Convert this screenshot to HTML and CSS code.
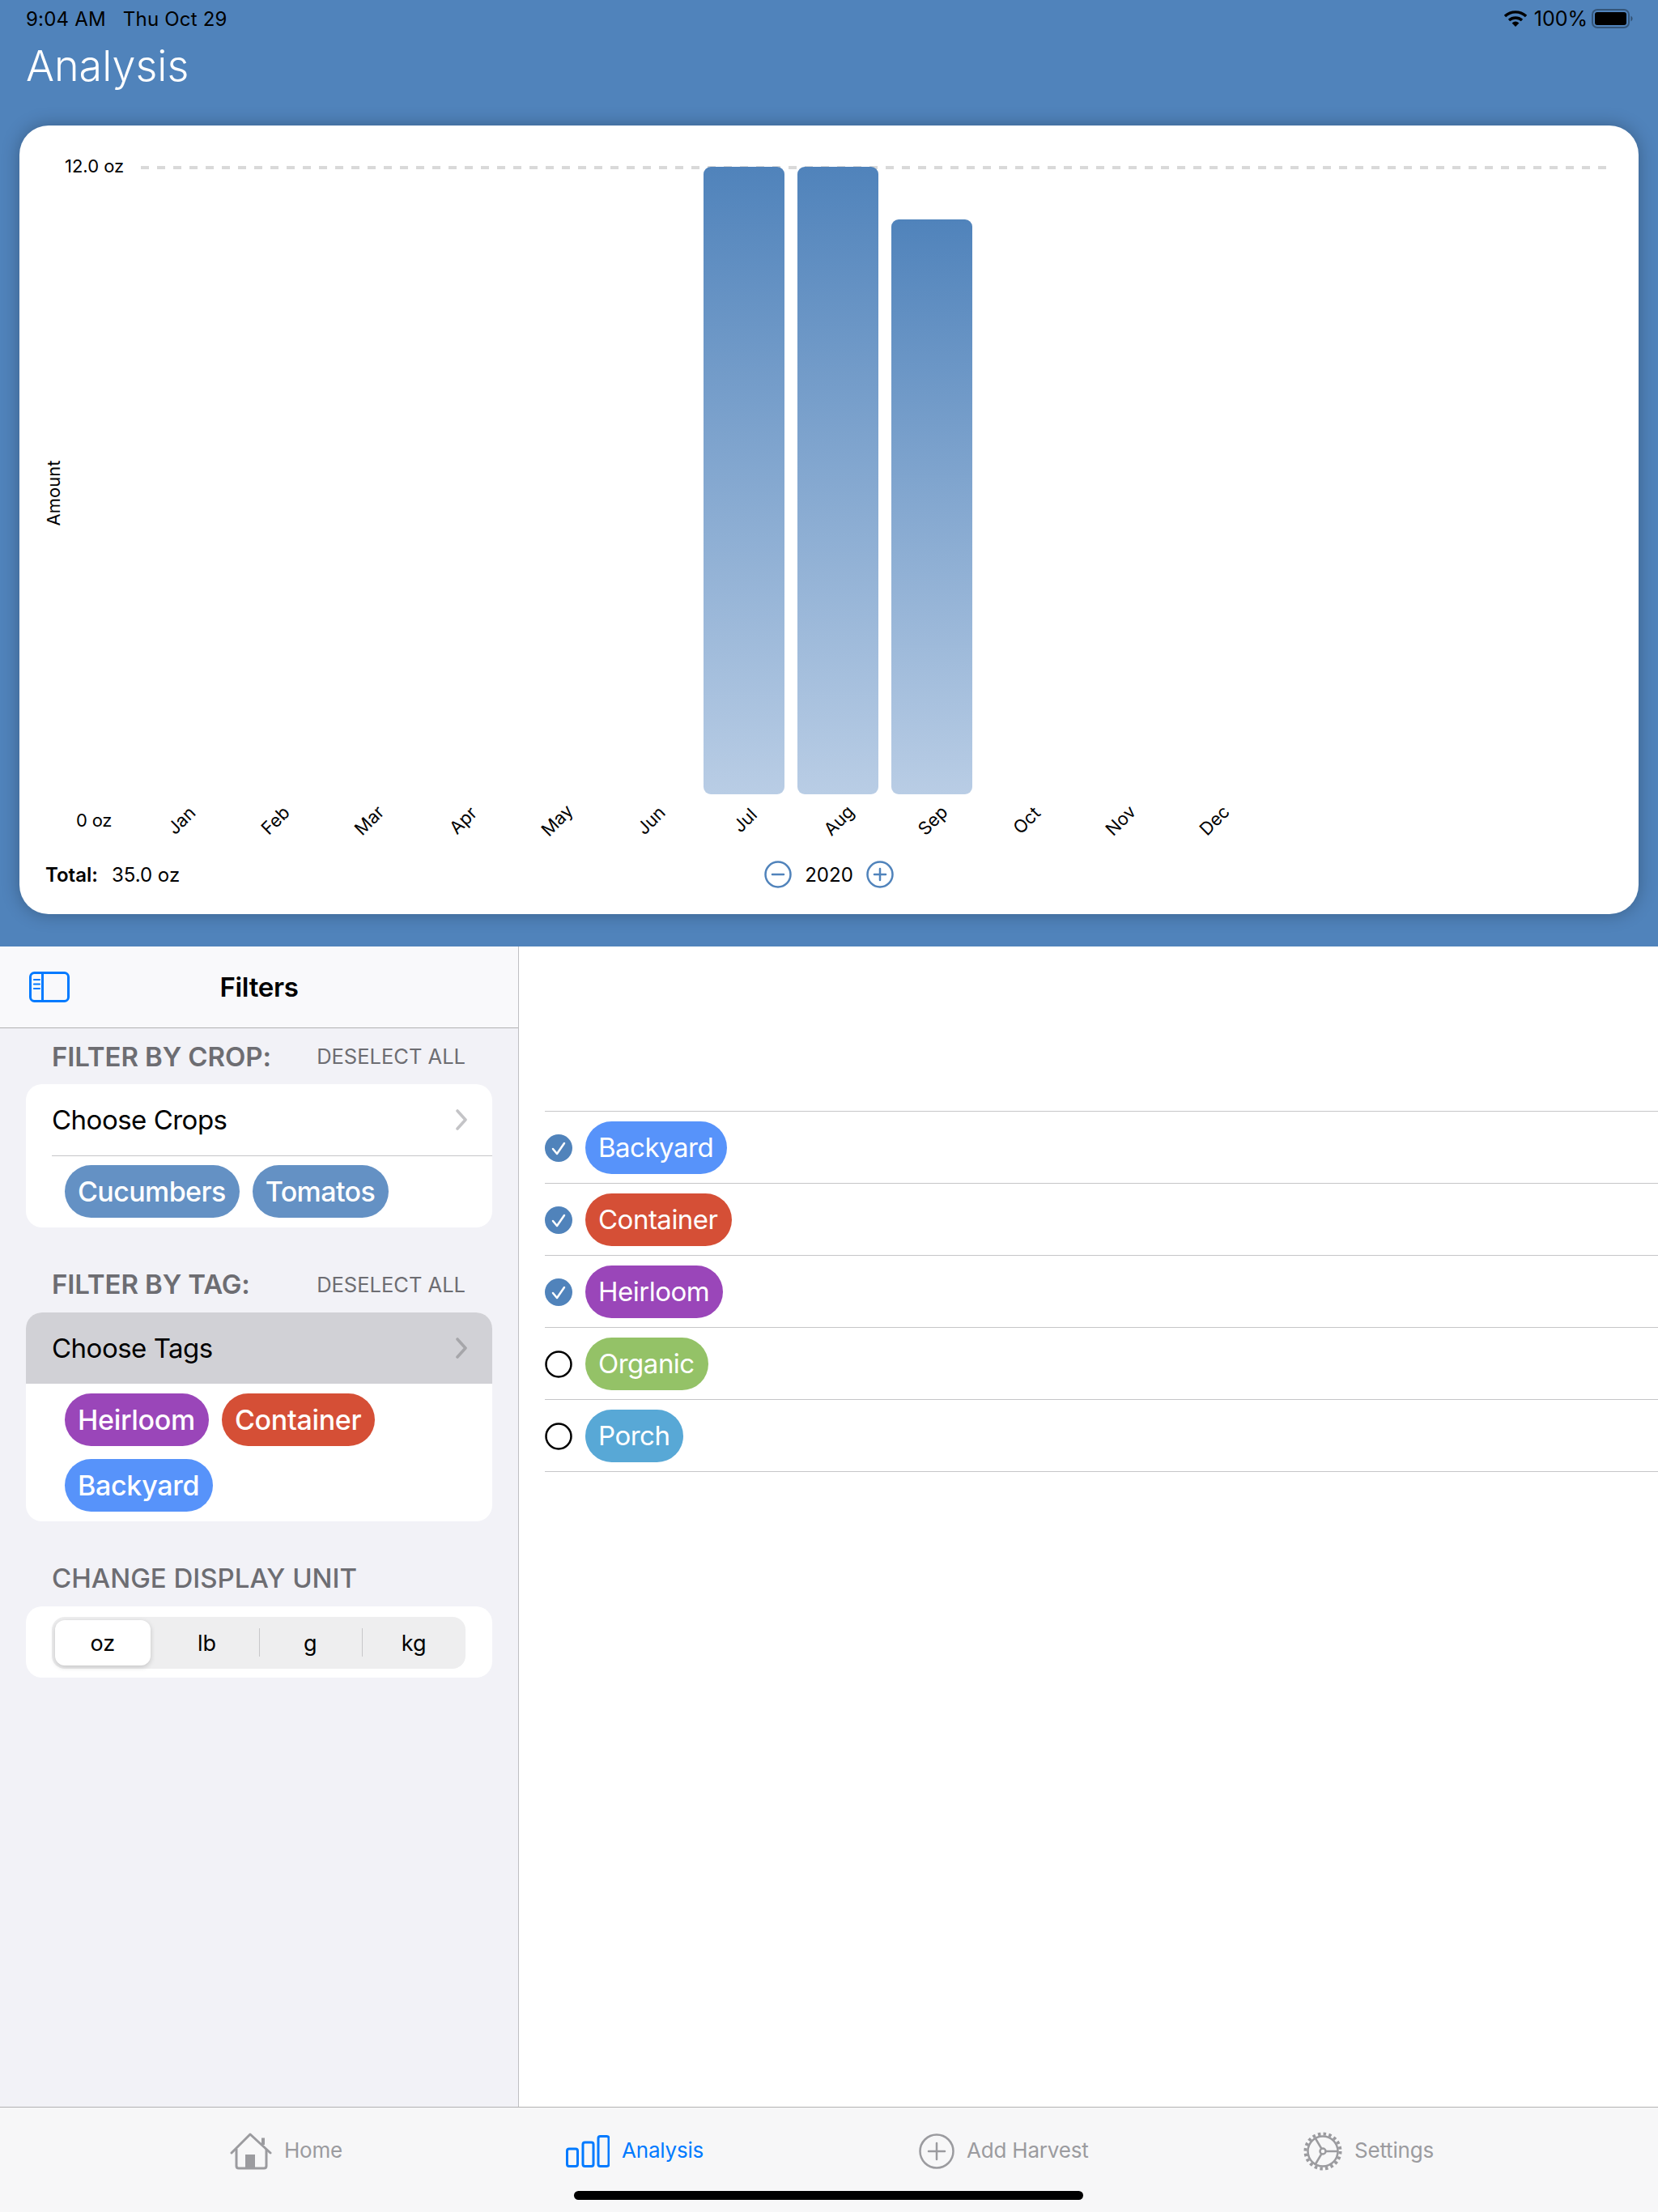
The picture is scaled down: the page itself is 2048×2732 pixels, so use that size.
FILE: index.html
```html
<!DOCTYPE html>
<html lang="en">
<head>
<meta charset="utf-8">
<title>Analysis</title>
<link rel="stylesheet" href="styles.css">
</head>
<body>
<div class="app">
  <header class="top">
    <div class="status">
      <div class="status-left"><span>9:04 AM</span><span>Thu Oct 29</span></div>
      <div class="status-right">
        <svg class="wifi" viewBox="0 0 28 20"><path d="M1 7 A19 19 0 0 1 27 7" fill="none" stroke="#000" stroke-width="3.4"/><path d="M6 12 A12 12 0 0 1 22 12" fill="none" stroke="#000" stroke-width="3.4"/><path d="M9.6 15.4 A7 7 0 0 1 18.4 15.4 L14 20 Z" fill="#000"/></svg>
        <span>100%</span>
        <svg class="battery" viewBox="0 0 52 24"><rect x="1" y="1" width="45" height="22" rx="6" fill="none" stroke="#000" stroke-opacity=".35" stroke-width="2"/><rect x="4" y="4" width="39" height="16" rx="3" fill="#000"/><path d="M48.500 8.500 A4 4 0 0 1 48.500 15.500 Z" fill="#000" fill-opacity=".4"/></svg>
      </div>
    </div>
    <h1 class="title">Analysis</h1>
    <section class="card">
      <div class="plot">
        <span class="axis-title">Amount</span>
        <span class="y-label y-max">12.0 oz</span>
        <span class="y-label y-min">0 oz</span>
        <div class="dash"></div>
        <div class="bars">
          <div class="col"></div><div class="col"></div><div class="col"></div>
          <div class="col"></div><div class="col"></div><div class="col"></div>
          <div class="col"><div class="bar" style="height:775px"></div></div>
          <div class="col"><div class="bar" style="height:775px"></div></div>
          <div class="col"><div class="bar" style="height:710px"></div></div>
          <div class="col"></div><div class="col"></div><div class="col"></div>
        </div>
      </div>
      <div class="months">
        <span>Jan</span><span>Feb</span><span>Mar</span><span>Apr</span><span>May</span><span>Jun</span>
        <span>Jul</span><span>Aug</span><span>Sep</span><span>Oct</span><span>Nov</span><span>Dec</span>
      </div>
      <div class="foot">
        <div class="total"><b>Total:</b><span>35.0 oz</span></div>
        <div class="stepper">
          <svg class="step" viewBox="0 0 34 34"><circle cx="17" cy="17" r="15.500" fill="none" stroke="#5083bb" stroke-width="2.500"/><path d="M10 17 H24" stroke="#5083bb" stroke-width="2.500" stroke-linecap="round"/></svg>
          <span>2020</span>
          <svg class="step" viewBox="0 0 34 34"><circle cx="17" cy="17" r="15.500" fill="none" stroke="#5083bb" stroke-width="2.500"/><path d="M10 17 H24 M17 10 V24" stroke="#5083bb" stroke-width="2.500" stroke-linecap="round"/></svg>
        </div>
        <div></div>
      </div>
    </section>
  </header>

  <main class="split">
    <aside class="side">
      <div class="nav">
        <svg class="side-icon" viewBox="0 0 50 38"><rect x="1.500" y="1.500" width="47" height="35" rx="5" fill="none" stroke="#007aff" stroke-width="3"/><path d="M16.500 2 V36" stroke="#007aff" stroke-width="3"/><path d="M6 10 H13 M6 15.500 H13 M6 21 H13" stroke="#007aff" stroke-width="2.200" stroke-linecap="round"/></svg>
        <span class="nav-title">Filters</span>
      </div>
      <div class="sec-head first"><span class="sec-title">FILTER BY CROP:</span><span class="sec-link">DESELECT ALL</span></div>
      <div class="group">
        <div class="row"><span>Choose Crops</span><svg class="chev" viewBox="0 0 14 26"><path d="M2 2 L12 13 L2 24" fill="none" stroke="#c4c4c7" stroke-width="3.600" stroke-linecap="round" stroke-linejoin="round"/></svg></div>
        <div class="chips ruled">
          <span class="chip strong crop">Cucumbers</span>
          <span class="chip strong crop">Tomatos</span>
        </div>
      </div>
      <div class="sec-head"><span class="sec-title">FILTER BY TAG:</span><span class="sec-link">DESELECT ALL</span></div>
      <div class="group">
        <div class="row active"><span>Choose Tags</span><svg class="chev" viewBox="0 0 14 26"><path d="M2 2 L12 13 L2 24" fill="none" stroke="#a6a6aa" stroke-width="3.600" stroke-linecap="round" stroke-linejoin="round"/></svg></div>
        <div class="chips">
          <span class="chip strong heirloom">Heirloom</span>
          <span class="chip strong container">Container</span>
          <span class="chip strong backyard">Backyard</span>
        </div>
      </div>
      <div class="sec-head unit"><span class="sec-title light">CHANGE DISPLAY UNIT</span></div>
      <div class="group seg-wrap">
        <div class="seg">
          <span class="seg-item on">oz</span>
          <span class="seg-item">lb</span>
          <span class="seg-item div">g</span>
          <span class="seg-item div">kg</span>
        </div>
      </div>
    </aside>
    <section class="pane">
      <ul class="tags">
        <li class="tag-row"><svg class="check" viewBox="0 0 34 34"><circle cx="17" cy="17" r="17" fill="#5083bb"/><path d="M10 18 L15 24 L24 11" fill="none" stroke="#fff" stroke-width="2.500" stroke-linecap="round" stroke-linejoin="round"/></svg><span class="chip backyard">Backyard</span></li>
        <li class="tag-row"><svg class="check" viewBox="0 0 34 34"><circle cx="17" cy="17" r="17" fill="#5083bb"/><path d="M10 18 L15 24 L24 11" fill="none" stroke="#fff" stroke-width="2.500" stroke-linecap="round" stroke-linejoin="round"/></svg><span class="chip container">Container</span></li>
        <li class="tag-row"><svg class="check" viewBox="0 0 34 34"><circle cx="17" cy="17" r="17" fill="#5083bb"/><path d="M10 18 L15 24 L24 11" fill="none" stroke="#fff" stroke-width="2.500" stroke-linecap="round" stroke-linejoin="round"/></svg><span class="chip heirloom">Heirloom</span></li>
        <li class="tag-row"><svg class="check" viewBox="0 0 34 34"><circle cx="17" cy="17" r="15.500" fill="none" stroke="#000" stroke-width="2.500"/></svg><span class="chip organic">Organic</span></li>
        <li class="tag-row"><svg class="check" viewBox="0 0 34 34"><circle cx="17" cy="17" r="15.500" fill="none" stroke="#000" stroke-width="2.500"/></svg><span class="chip porch">Porch</span></li>
      </ul>
    </section>
  </main>

  <footer class="tabs">
    <div class="tab">
      <svg class="ic-home" viewBox="0 0 52 46"><path d="M2 25 L25 2 L50 25" fill="none" stroke="#9b9b9f" stroke-width="3" stroke-linecap="round" stroke-linejoin="round"/><path d="M41 15 V6.500" fill="none" stroke="#9b9b9f" stroke-width="4"/><path d="M8 20 V41 Q8 44 11 44 H42 Q45 44 45 41 V20" fill="none" stroke="#9b9b9f" stroke-width="3"/><rect x="19" y="27" width="12" height="17" fill="#9b9b9f"/></svg>
      <span class="tab-label">Home</span>
    </div>
    <div class="tab current">
      <svg class="ic-bars" viewBox="0 0 54 40"><rect x="1.500" y="17" width="13" height="21.500" rx="2.500" fill="none" stroke="#007aff" stroke-width="3"/><rect x="21" y="9" width="13" height="29.500" rx="2.500" fill="none" stroke="#007aff" stroke-width="3"/><rect x="40" y="1.500" width="13" height="37" rx="2.500" fill="none" stroke="#007aff" stroke-width="3"/></svg>
      <span class="tab-label">Analysis</span>
    </div>
    <div class="tab">
      <svg class="ic-add" viewBox="0 0 44 44"><circle cx="22" cy="22" r="20.500" fill="none" stroke="#9b9b9f" stroke-width="2.500"/><path d="M12 22 H32 M22 12 V32" stroke="#9b9b9f" stroke-width="2.500" stroke-linecap="round"/></svg>
      <span class="tab-label">Add Harvest</span>
    </div>
    <div class="tab">
      <svg class="ic-gear" viewBox="0 0 48 48"><circle cx="24" cy="24" r="18.500" fill="none" stroke="#9b9b9f" stroke-width="2.500"/><circle cx="24" cy="24" r="21.500" fill="none" stroke="#9b9b9f" stroke-width="4" stroke-dasharray="3.500 3.250"/><circle cx="24" cy="24" r="3.500" fill="none" stroke="#9b9b9f" stroke-width="2.500"/><path d="M27.500 24 H42 M22.500 21 L14.500 7.500 M22.500 27 L14.500 40.500" fill="none" stroke="#9b9b9f" stroke-width="2.500"/></svg>
      <span class="tab-label">Settings</span>
    </div>
    <div class="home-bar"></div>
  </footer>
</div>
</body>
</html>
```

FILE: styles.css
```css
* { box-sizing: border-box; }
html, body { margin: 0; padding: 0; }
body {
  width: 2048px;
  height: 2732px;
  overflow: hidden;
  background: #fff;
  color: #000;
  font-family: Inter, "Noto Sans", "Liberation Sans", sans-serif;
}
.app { display: flex; flex-direction: column; height: 2732px; }

/* header */
.top { background: #5083bb; height: 1169px; padding: 0 24px; display: flex; flex-direction: column; flex: none; }
.status { height: 46px; margin: 0 -24px; padding: 0 30px 0 32px; display: flex; justify-content: space-between; align-items: center; font-size: 24px; }
.status-left { display: flex; gap: 21px; letter-spacing: 0.2px; }
.status-right { display: flex; align-items: center; gap: 9px; font-size: 25px; }
.wifi { width: 28px; height: 20px; }
.battery { width: 52px; height: 24px; margin-left: -4px; }
.title { margin: 0 0 0 8px; height: 72px; line-height: 72px; font-size: 52px; font-weight: 300; color: #fff; }
.card {
  margin-top: 37px;
  height: 974px;
  background: #fff;
  border-radius: 36px;
  box-shadow: 0 0 22px rgba(0, 0, 0, .28);
  display: flex;
  flex-direction: column;
}
.plot { position: relative; margin: 51px 0 0 150px; width: 1810px; height: 775px; }
.dash {
  position: absolute;
  left: 0; right: 0; top: -1px;
  height: 4px;
  background: repeating-linear-gradient(90deg, #d9d9d9 0 10px, transparent 10px 20px);
}
.bars { position: relative; display: flex; gap: 16px; height: 100%; align-items: flex-end; margin-left: -1px; }
.col { width: 100px; flex: none; display: flex; align-items: flex-end; }
.bar { width: 100%; border-radius: 9px; background: linear-gradient(180deg, #5083bb, #b9cde5); }
.y-label { position: absolute; font-size: 22px; line-height: 26px; white-space: nowrap; }
.y-max { left: -94px; top: -14px; }
.y-min { left: -80px; top: 794px; letter-spacing: -0.2px; }
.axis-title { position: absolute; left: -108px; top: 403px; font-size: 22px; line-height: 26px; transform: translate(-50%, -50%) rotate(-90deg); white-space: nowrap; }
.months { margin-left: 150px; height: 64px; display: flex; gap: 16px; align-items: center; font-size: 22px; }
.months span { width: 100px; flex: none; text-align: center; transform: rotate(-45deg); }
.foot { height: 70px; padding: 0 32px; display: grid; grid-template-columns: 1fr auto 1fr; align-items: center; font-size: 24px; }
.total { display: flex; gap: 17px; }
.total b { font-weight: 600; }
.stepper { display: flex; align-items: center; gap: 16px; }
.step { width: 34px; height: 34px; }

/* split */
.split { flex: 1; display: flex; min-height: 0; }
.side { width: 641px; flex: none; background: #f2f2f7; border-right: 1px solid #c0c0c3; }
.nav { position: relative; height: 101px; background: #f9f9fb; border-bottom: 1px solid #b2b2b2; display: flex; align-items: center; justify-content: center; }
.side-icon { position: absolute; left: 36px; top: 31px; width: 50px; height: 38px; }
.nav-title { font-size: 33px; font-weight: 600; letter-spacing: -0.3px; }
.sec-head { height: 70px; margin-top: 35px; padding: 0 65px 0 64px; display: flex; align-items: center; justify-content: space-between; }
.sec-head.first { height: 69px; margin-top: 0; }
.sec-head.unit { margin-top: 35px; }
.sec-title { font-size: 33px; font-weight: 600; color: #6d6d72; letter-spacing: -0.1px; }
.sec-title.light { font-weight: 500; letter-spacing: 0; }
.sec-link { font-size: 25.500px; color: #6d6d72; }
.group { margin: 0 32px; background: #fff; border-radius: 20px; overflow: hidden; }
.row { height: 88px; padding: 0 31px 0 32px; display: flex; align-items: center; justify-content: space-between; font-size: 33px; letter-spacing: -0.5px; }
.row.active { background: #d1d1d6; }
.chev { width: 14px; height: 26px; }
.chips { padding: 12px 48px; display: flex; flex-wrap: wrap; gap: 16px; position: relative; }
.chips.ruled::before { content: ""; position: absolute; left: 32px; right: 0; top: 0; height: 1px; background: #c6c6c8; }
.chip { height: 65px; line-height: 65px; padding: 0 17px 0 16px; border-radius: 33px; font-size: 33px; color: #fff; letter-spacing: -0.5px; white-space: nowrap; }
.chip.strong { font-weight: 500; font-size: 34px; letter-spacing: -0.3px; }
.chip.strong.crop { letter-spacing: -0.6px; background: #6491c4; }
.heirloom { background: #9a46b9; }
.container { background: #d54f36; }
.backyard { background: #5793fa; }
.organic { background: #94c267; }
.porch { background: #58a8d6; }
.seg-wrap { height: 88px; padding: 13px 33px 11px 32px; }
.seg { height: 64px; border-radius: 16px; background: #eeeeef; display: grid; grid-template-columns: repeat(4, 1fr); font-size: 27px; }
.seg-item { position: relative; display: flex; align-items: center; justify-content: center; }
.seg-item.on { margin: 4px 6px 4px 4px; background: #fff; border-radius: 12px; box-shadow: 0 2px 6px rgba(0, 0, 0, .18); }
.seg-item.div::before { content: ""; position: absolute; left: 0; top: 14px; height: 35px; width: 1px; background: #c8c8ca; }

/* pane */
.pane { flex: 1; background: #fff; padding: 203px 0 0 32px; min-width: 0; }
.tags { list-style: none; margin: 0; padding: 0; border-top: 1px solid #c6c6c8; }
.tag-row { height: 89px; display: flex; align-items: center; gap: 16px; border-bottom: 1px solid #c6c6c8; }
.check { width: 34px; height: 34px; flex: none; margin-top: 1px; }

/* tabs */
.tabs {
  position: relative;
  height: 130px;
  flex: none;
  border-top: 1px solid #b2b2b2;
  background: #f7f7f8;
  padding: 31px 0 0 284px;
  display: grid;
  grid-template-columns: 415px 436px 475px auto;
  align-items: start;
  font-size: 26px;
  letter-spacing: -0.2px;
  color: #9b9b9f;
}
.tab { display: flex; align-items: center; height: 46px; gap: 15px; }
.tab-label { margin-bottom: 3px; }
.tab.current { color: #007aff; }
.ic-home { width: 52px; height: 46px; }
.ic-bars { width: 54px; height: 40px; }
.ic-add { width: 44px; height: 44px; }
.ic-gear { width: 48px; height: 48px; }
.home-bar { position: absolute; left: 709px; top: 103px; width: 629px; height: 11px; border-radius: 6px; background: #000; }
```
